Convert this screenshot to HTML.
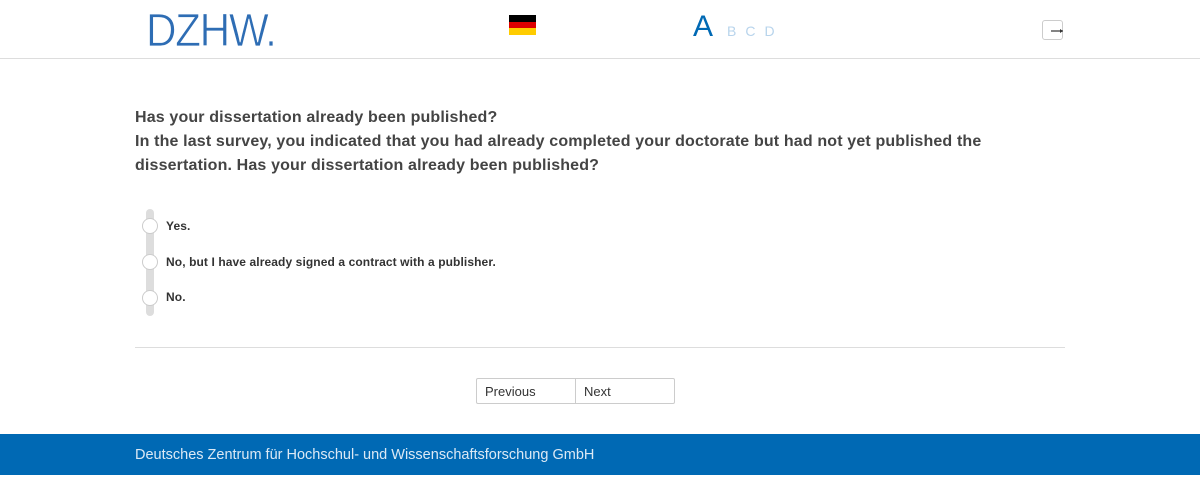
<!DOCTYPE html>
<html><head><meta charset="utf-8"><style>
*{margin:0;padding:0;box-sizing:border-box}
body{width:1200px;height:484px;background:#fff;font-family:"Liberation Sans",sans-serif;position:relative;overflow:hidden;color:#444}
.hdr{position:absolute;left:0;top:0;width:1200px;height:59px;border-bottom:1px solid #ddd}
.logo{position:absolute;left:146px;top:3px;font-size:46px;color:#2e6db4;letter-spacing:-1.5px;font-weight:normal;transform:scaleX(0.92);transform-origin:left;-webkit-text-stroke:0.8px #fff}
.flag{position:absolute;left:509px;top:15px;width:27px;height:20px}
.flag div{height:33.3%}
.abc{position:absolute;left:693px;top:10px;color:#0069b4;font-size:30px}
.abc span{font-size:14px;color:#b8d4ec;margin-left:9px}
.abc span.b{margin-left:14px}
.exit{position:absolute;left:1042px;top:20px;width:21px;height:20px;border:1px solid #ccc;border-radius:3px}
.q{position:absolute;left:135px;top:106px;font-size:16px;font-weight:bold;line-height:24px;color:#444;letter-spacing:0.15px}
.bar{position:absolute;left:146px;top:209px;width:8px;height:107px;background:#ddd;border-radius:4px}
.r{position:absolute;left:142px;width:16px;height:16px;border-radius:50%;background:#fff;border:1px solid #ccc}
.lbl{position:absolute;left:166px;font-size:12px;font-weight:bold;color:#333;letter-spacing:0.1px}
.hr{position:absolute;left:135px;top:347px;width:930px;height:1px;background:#ddd}
.btn{position:absolute;top:378px;height:26px;border:1px solid #ccc;font-size:13px;color:#333;padding:5px 8px;background:#fff}
.foot{position:absolute;left:0;top:434px;width:1200px;height:41px;background:#0069b4;color:#dce9f5;font-size:14.5px;padding:13px 135px 0}
</style></head><body>
<div class="hdr">
<div class="logo">DZHW.</div>
<div class="flag"><div style="background:#000"></div><div style="background:#d00"></div><div style="background:#fc0"></div></div>
<div class="abc">A<span class="b">B</span><span>C</span><span>D</span></div>
<div class="exit"><svg width="21" height="20" style="position:absolute;left:0;top:0"><path d="M8 10H20" stroke="#333" stroke-width="1.2"/><path d="M17 8L20 10L17 12Z" fill="#333"/></svg></div>
</div>
<div class="q">Has your dissertation already been published?<br>In the last survey, you indicated that you had already completed your doctorate but had not yet published the<br>dissertation. Has your dissertation already been published?</div>
<div class="bar"></div>
<div class="r" style="top:218px"></div><div class="lbl" style="top:219px">Yes.</div>
<div class="r" style="top:254px"></div><div class="lbl" style="top:255px">No, but I have already signed a contract with a publisher.</div>
<div class="r" style="top:290px"></div><div class="lbl" style="top:290px">No.</div>
<div class="hr"></div>
<div class="btn" style="left:476px;width:100px;border-radius:2px 0 0 2px">Previous</div>
<div class="btn" style="left:575px;width:100px;border-radius:0 2px 2px 0">Next</div>
<div class="foot">Deutsches Zentrum für Hochschul- und Wissenschaftsforschung GmbH</div>
</body></html>
